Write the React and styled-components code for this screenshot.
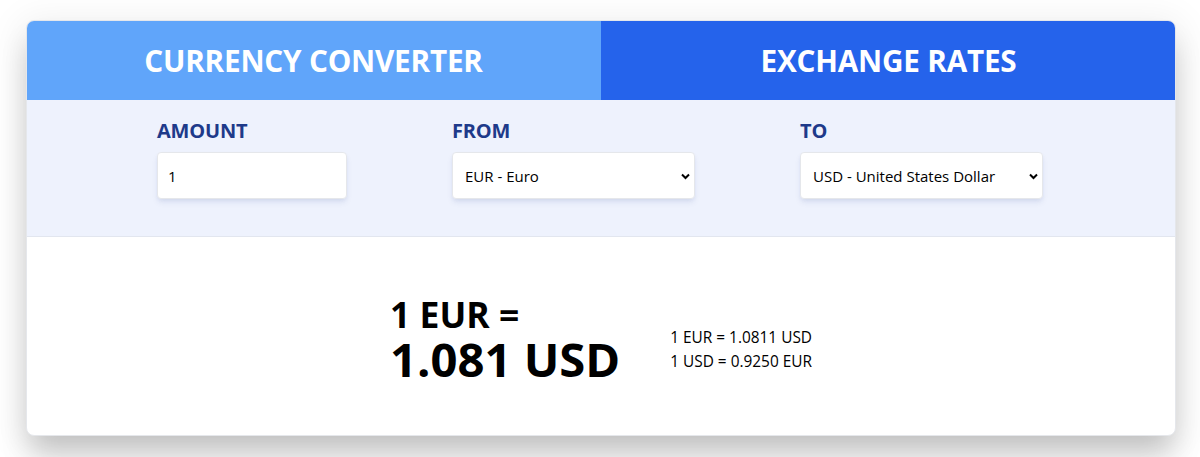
import React, { useState } from "react";
import styled, { createGlobalStyle } from "styled-components";

const Global = createGlobalStyle`
  html, body { margin: 0; padding: 0; background: #ffffff; }
  body { font-family: "Open Sans", "Noto Sans", sans-serif; color: #000; }
  * { box-sizing: border-box; }
`;

const Page = styled.div`
  min-height: 100vh;
  padding: 20px 24px 22px 26px;
`;

const Card = styled.div`
  border: 1px solid #e5e7eb;
  border-radius: 8px;
  overflow: hidden;
  background: #fff;
  box-shadow: 0 22px 30px -4px rgba(0,0,0,0.2), 0 6px 36px 6px rgba(0,0,0,0.07);
`;

const Tabs = styled.div`
  display: grid;
  grid-template-columns: 1fr 1fr;
  margin: -1px -1px 0 -1px;
`;

const Tab = styled.button`
  height: 80px;
  border: none;
  margin: 0;
  padding: 0;
  font-family: inherit;
  font-size: 29.7px;
  font-weight: 700;
  color: #fff;
  letter-spacing: -0.2px;
  background: ${(p) => (p.$active ? "#2563eb" : "#60a5fa")};
  cursor: pointer;
`;

const Form = styled.div`
  background: #eef2fd;
  border-bottom: 1px solid #e2e6ef;
  height: 137px;
  display: flex;
  justify-content: center;
  gap: 105px;
  padding-top: 18px;
  padding-right: 2px;
`;

const Field = styled.div`
  display: flex;
  flex-direction: column;
  width: ${(p) => p.$w}px;
`;

const Label = styled.label`
  font-size: 20px;
  font-weight: 700;
  color: #1e3a8a;
  line-height: 26px;
  margin-bottom: 8px;
  letter-spacing: -0.2px;
`;

const fieldBox = `
  height: 47px;
  width: 100%;
  border: 1px solid #e5e7eb;
  border-radius: 4px;
  font-family: inherit;
  font-size: 15px;
  color: #000;
  background: #fff;
  box-shadow: 0 4px 6px -1px rgba(30,58,138,0.1), 0 2px 4px -1px rgba(30,58,138,0.06);
  outline: none;
`;

const Input = styled.input`
  ${fieldBox}
  padding: 0 10px;
`;

const SelectWrap = styled.div`
  position: relative;
  width: 100%;
`;

const Select = styled.select`
  ${fieldBox}
  appearance: none;
  -webkit-appearance: none;
  padding: 0 30px 0 12px;
`;

const Chevron = styled.svg`
  position: absolute;
  right: 5px;
  top: 21px;
  width: 9px;
  height: 7px;
  pointer-events: none;
`;

const Result = styled.div`
  height: 198px;
  display: flex;
  justify-content: center;
  align-items: center;
  gap: 50px;
  padding-top: 5px;
`;

const Big = styled.div`
  display: flex;
  flex-direction: column;
  font-weight: 700;
`;

const BigTop = styled.div`
  font-size: 35.5px;
  line-height: 41px;
`;

const BigValue = styled.div`
  font-size: 47.2px;
  line-height: 48px;
`;

const Small = styled.div`
  font-size: 15.4px;
  line-height: 24px;
  margin-top: 22px;
`;

function CurrencySelect({ value, options, onChange }) {
  return (
    <SelectWrap>
      <Select value={value} onChange={(e) => onChange(e.target.value)}>
        {options.map((o) => (
          <option key={o} value={o}>{o}</option>
        ))}
      </Select>
      <Chevron viewBox="0 0 9 7">
        <path d="M1 1.5 L4.5 5 L8 1.5" fill="none" stroke="#000" strokeWidth="2" />
      </Chevron>
    </SelectWrap>
  );
}

export default function App() {
  const [amount, setAmount] = useState("1");
  const [from, setFrom] = useState("EUR - Euro");
  const [to, setTo] = useState("USD - United States Dollar");
  const opts = ["EUR - Euro", "USD - United States Dollar", "GBP - British Pound"];
  return (
    <Page>
      <Global />
      <Card>
        <Tabs>
          <Tab>CURRENCY CONVERTER</Tab>
          <Tab $active>EXCHANGE RATES</Tab>
        </Tabs>
        <Form>
          <Field $w={190}>
            <Label>AMOUNT</Label>
            <Input value={amount} onChange={(e) => setAmount(e.target.value)} />
          </Field>
          <Field $w={243}>
            <Label>FROM</Label>
            <CurrencySelect value={from} options={opts} onChange={setFrom} />
          </Field>
          <Field $w={243}>
            <Label>TO</Label>
            <CurrencySelect value={to} options={opts} onChange={setTo} />
          </Field>
        </Form>
        <Result>
          <Big>
            <BigTop>1 EUR =</BigTop>
            <BigValue>1.081 USD</BigValue>
          </Big>
          <Small>
            <div>1 EUR = 1.0811 USD</div>
            <div>1 USD = 0.9250 EUR</div>
          </Small>
        </Result>
      </Card>
    </Page>
  );
}
